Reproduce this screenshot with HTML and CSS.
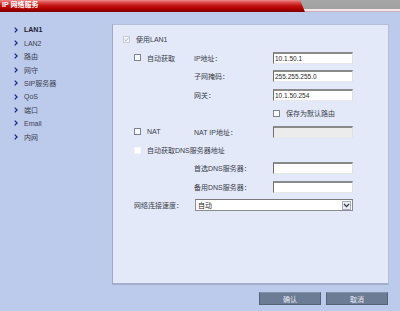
FILE: index.html
```html
<!DOCTYPE html>
<html>
<head>
<meta charset="utf-8">
<link rel="stylesheet" href="styles.css">
</head>
<body>
<div class="header">
  <div class="tab"><span class="title">IP 网络服务</span></div>
</div>
<div class="main">
  <ul class="nav">
    <li class="active"><svg class="chev" viewBox="0 0 4 6" width="4" height="6"><path d="M0.7 0.6 L3.1 3 L0.7 5.4" fill="none" stroke="#1b2d78" stroke-width="1.3"/></svg>LAN1</li>
    <li><svg class="chev" viewBox="0 0 4 6" width="4" height="6"><path d="M0.7 0.6 L3.1 3 L0.7 5.4" fill="none" stroke="#1b2d78" stroke-width="1.3"/></svg>LAN2</li>
    <li><svg class="chev" viewBox="0 0 4 6" width="4" height="6"><path d="M0.7 0.6 L3.1 3 L0.7 5.4" fill="none" stroke="#1b2d78" stroke-width="1.3"/></svg>路由</li>
    <li><svg class="chev" viewBox="0 0 4 6" width="4" height="6"><path d="M0.7 0.6 L3.1 3 L0.7 5.4" fill="none" stroke="#1b2d78" stroke-width="1.3"/></svg>网守</li>
    <li><svg class="chev" viewBox="0 0 4 6" width="4" height="6"><path d="M0.7 0.6 L3.1 3 L0.7 5.4" fill="none" stroke="#1b2d78" stroke-width="1.3"/></svg>SIP服务器</li>
    <li><svg class="chev" viewBox="0 0 4 6" width="4" height="6"><path d="M0.7 0.6 L3.1 3 L0.7 5.4" fill="none" stroke="#1b2d78" stroke-width="1.3"/></svg>QoS</li>
    <li><svg class="chev" viewBox="0 0 4 6" width="4" height="6"><path d="M0.7 0.6 L3.1 3 L0.7 5.4" fill="none" stroke="#1b2d78" stroke-width="1.3"/></svg>端口</li>
    <li><svg class="chev" viewBox="0 0 4 6" width="4" height="6"><path d="M0.7 0.6 L3.1 3 L0.7 5.4" fill="none" stroke="#1b2d78" stroke-width="1.3"/></svg>Email</li>
    <li><svg class="chev" viewBox="0 0 4 6" width="4" height="6"><path d="M0.7 0.6 L3.1 3 L0.7 5.4" fill="none" stroke="#1b2d78" stroke-width="1.3"/></svg>内网</li>
  </ul>
  <div class="content">
    <div class="panel">
      <div class="form">
        <div class="cell top"><span class="cb checked"><svg viewBox="0 0 7 7" width="7" height="7"><path d="M1.3 3.6 L2.9 5.1 L5.8 1.6" fill="none" stroke="#b0b6c4" stroke-width="1"/></svg></span><span>使用LAN1</span></div>

        <div class="cell c1"><span class="cb"></span><span>自动获取</span></div>
        <div class="cell c2">IP地址：</div>
        <div class="cell c3"><span class="inp">10.1.50.1</span></div>

        <div class="cell c2">子网掩码：</div>
        <div class="cell c3"><span class="inp">255.255.255.0</span></div>

        <div class="cell c2">网关：</div>
        <div class="cell c3"><span class="inp">10.1.50.254</span></div>

        <div class="cell c3"><span class="cb"></span><span>保存为默认路由</span></div>

        <div class="cell c1"><span class="cb"></span><span>NAT</span></div>
        <div class="cell c2">NAT IP地址：</div>
        <div class="cell c3"><span class="inp disabled"></span></div>

        <div class="cell c1 wide"><span class="cb plain"></span><span>自动获取DNS服务器地址</span></div>

        <div class="cell c2">首选DNS服务器：</div>
        <div class="cell c3"><span class="inp"></span></div>

        <div class="cell c2">备用DNS服务器：</div>
        <div class="cell c3"><span class="inp"></span></div>

        <div class="cell c1">网络连接速度：</div>
        <div class="cell c23"><span class="select"><span class="sel-text">自动</span><span class="sel-btn"><svg viewBox="0 0 7 5" width="7" height="5"><path d="M1 1 L3.5 3.6 L6 1" fill="none" stroke="#303848" stroke-width="1.3"/></svg></span></span></div>
      </div>
    </div>
    <div class="buttons">
      <span class="btn">确认</span>
      <span class="btn">取消</span>
    </div>
  </div>
</div>
</body>
</html>
```

FILE: styles.css
```css
html, body {
  margin: 0;
  padding: 0;
}
body {
  width: 400px;
  height: 311px;
  overflow: hidden;
  background: #bccaec;
  font-family: "Liberation Sans", "Noto Sans CJK SC", sans-serif;
  font-size: 7px;
  color: #3a3f4a;
}
.header {
  height: 12px;
  background: linear-gradient(to bottom, #a6a6a6 0, #a2a2a2 9px, #f4e6e8 9px, #f4e6e8 11px, #c9b0bc 11px, #c9b0bc 12px);
}
.tab {
  width: 305px;
  height: 12px;
  clip-path: polygon(0 0, 300px 0, 305px 100%, 0 100%);
  background: linear-gradient(to bottom, #f08a8a 0, #d84040 3px, #c01010 6px, #b20000 9px, #8c0000 10px, #8c0000 12px);
  display: flex;
  align-items: center;
}
.title {
  color: #fff;
  font-weight: bold;
  font-size: 7px;
  padding-left: 2px;
  line-height: 10px;
  margin-top: -2px;
}
.main {
  display: flex;
  padding-top: 12px;
}
.nav {
  list-style: none;
  margin: 0;
  padding: 0 0 0 14px;
  width: 98px;
}
.nav li {
  display: flex;
  align-items: center;
  height: 13.4px;
  color: #3c4150;
}
.nav li:first-child {
  margin-top: -1px;
}
.nav li.active {
  font-weight: bold;
  color: #1c2030;
}
.chev {
  margin-right: 6px;
  flex: none;
}
.content {
  display: flex;
  flex-direction: column;
}
.panel {
  width: 275px;
  height: 258px;
  background: #e4e9f9;
  border: 1px solid #b4bed8;
  border-left-color: #9ea8c4;
  border-bottom: 2px solid #a4aeca;
  box-sizing: content-box;
}
.form {
  display: grid;
  grid-template-columns: 11px 60px 79px 80px;
  grid-template-rows: 18px 19px 18px 19px 18px 19px 18px 18px 19px 18px;
  padding: 5px 0 0 10px;
}
.cell {
  display: flex;
  align-items: center;
  gap: 6px;
  white-space: nowrap;
}
.top {
  grid-column: 1 / 3;
}
.c1 { grid-column: 2; }
.c2 { grid-column: 3; }
.c3 { grid-column: 4; }
.c23 { grid-column: 3 / 5; padding-left: 1px; }
.wide { grid-column: 2 / 4; }
.cb {
  width: 7px;
  height: 7px;
  box-sizing: border-box;
  border: 1px solid #7d8593;
  background: #fbfcfe;
  flex: none;
  display: flex;
}
.cb.checked {
  border-color: #c8ccd6;
  background: #f4f5f8;
}
.cb.checked svg {
  margin: -1px;
}
.cb.plain {
  border-color: #f4f6fc;
  background: #ffffff;
}
.inp {
  width: 80px;
  height: 12px;
  box-sizing: border-box;
  background: #ffffff;
  border-top: 2px solid #8a8a8a;
  border-left: 1px solid #6e6e6e;
  border-right: 1px solid #e0e0e0;
  border-bottom: 1px solid #e8e8e8;
  display: flex;
  align-items: center;
  padding-left: 1px;
  color: #2a2a2a;
  font-size: 6.5px;
}
.inp.disabled {
  background: #ececec;
}
.select {
  width: 158px;
  height: 12px;
  box-sizing: border-box;
  background: #ffffff;
  border: 1px solid #8c8c8c;
  border-top-color: #7a7a7a;
  display: flex;
  align-items: center;
}
.sel-text {
  flex: 1;
  padding-left: 2px;
  color: #2a2a2a;
}
.sel-btn {
  width: 9px;
  height: 9px;
  margin-right: 1px;
  box-sizing: border-box;
  border: 1px solid #a9afbd;
  background: #e8ecf4;
  display: flex;
  align-items: center;
  justify-content: center;
}
.buttons {
  display: flex;
  justify-content: flex-end;
  gap: 5px;
  margin-top: 7px;
  padding-right: 1px;
}
.btn {
  width: 62px;
  height: 13px;
  box-sizing: border-box;
  background: #6d7c95;
  border: 1px solid #56627a;
  border-top-color: #8490a6;
  color: #e8edf6;
  display: flex;
  align-items: center;
  justify-content: center;
  font-size: 7px;
}
```
